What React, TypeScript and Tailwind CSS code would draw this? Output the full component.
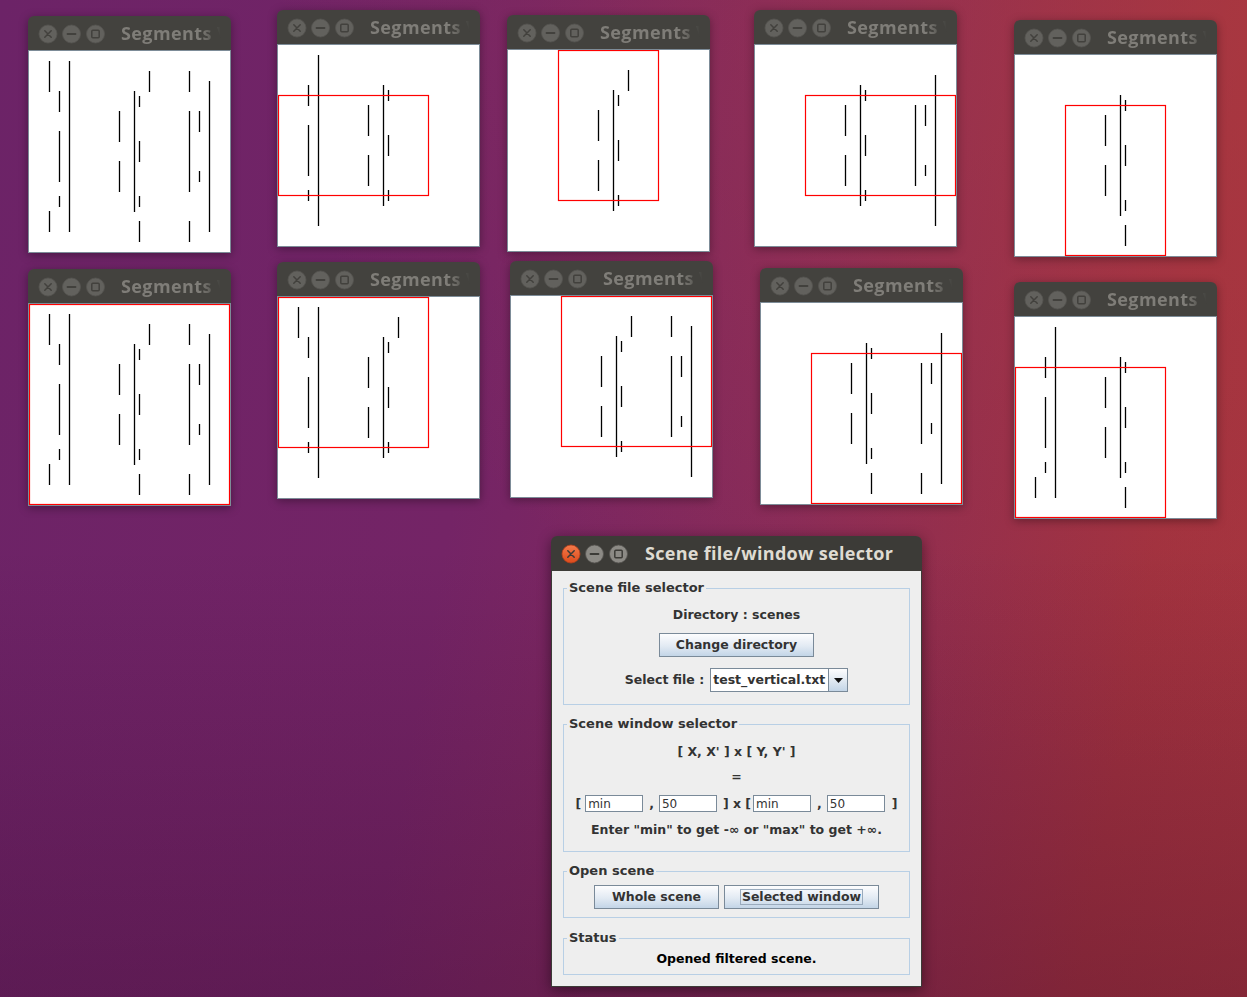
import React from "react";

// scene segments: [x, y1, y2] in viewer pixels
const SEGS: [number, number, number][] = [
  [20, 10, 40], [40, 10, 180], [30, 40, 60], [30, 80, 130], [30, 145, 155],
  [20, 160, 180], [90, 60, 90], [90, 110, 140], [105, 40, 160], [110, 45, 55],
  [110, 90, 110], [110, 145, 155], [110, 170, 190], [120, 20, 40], [160, 20, 40],
  [160, 60, 140], [160, 170, 190], [170, 60, 80], [170, 120, 130], [180, 30, 180],
];

type Rect = [number, number, number, number]; // x1, x2, y1, y2

const VIEWERS: { left: number; top: number; rect: Rect | null }[] = [
  { left: 28, top: 16, rect: null },
  { left: 277, top: 10, rect: [0, 150, 50, 150] },
  { left: 507, top: 15, rect: [50, 150, 0, 150] },
  { left: 754, top: 10, rect: [50, 200, 50, 150] },
  { left: 1014, top: 20, rect: [50, 150, 50, 200] },
  { left: 28, top: 269, rect: [0, 200, 0, 200] },
  { left: 277, top: 262, rect: [0, 150, 0, 150] },
  { left: 510, top: 261, rect: [50, 200, 0, 150] },
  { left: 760, top: 268, rect: [50, 200, 50, 200] },
  { left: 1014, top: 282, rect: [0, 150, 50, 200] },
];

const TitleButtons = ({ active = false, h }: { active?: boolean; h: number }) => {
  const grey = active ? "#8c8a85" : "#62615d";
  const sym = active ? "#3c3b37" : "#42413d";
  return (
    <svg width="80" height={h} viewBox={`0 0 80 ${h}`} className="shrink-0">
      <defs>
        <linearGradient id="closeGrad" x1="0" y1="0" x2="0" y2="1">
          <stop offset="0" stopColor="#f47a4a" />
          <stop offset="1" stopColor="#dc4b1c" />
        </linearGradient>
      </defs>
      <circle cx="20" cy="18" r="9" fill={active ? "url(#closeGrad)" : grey} stroke={active ? "#b9401a" : "#555450"} strokeWidth="0.8" />
      <path d="M16.8 14.8 L23.2 21.2 M23.2 14.8 L16.8 21.2" stroke={sym} strokeWidth="1.5" strokeLinecap="round" />
      <circle cx="43.5" cy="18" r="9" fill={grey} stroke="#555450" strokeWidth="0.8" />
      <path d="M39.5 18 L47.5 18" stroke={sym} strokeWidth="1.8" strokeLinecap="round" />
      <circle cx="67.5" cy="18" r="9" fill={grey} stroke="#555450" strokeWidth="0.8" />
      <rect x="63.8" y="14.3" width="7.4" height="7.4" rx="1" fill="none" stroke={sym} strokeWidth="1.5" />
    </svg>
  );
};

const SegViewer = ({ left, top, rect }: { left: number; top: number; rect: Rect | null }) => {
  const shown = rect
    ? SEGS.filter(([x, y1, y2]) => x >= rect[0] && x <= rect[1] && y2 >= rect[2] && y1 <= rect[3])
    : SEGS;
  return (
    <div className="absolute w-[203px] rounded-t-[6px] shadow-[0_2px_10px_rgba(0,0,0,0.35)]" style={{ left, top }}>
      <div className="flex h-[34px] items-center overflow-hidden rounded-t-[6px] bg-[#43423e]">
        <TitleButtons h={34} />
        <div className="w-[115px] overflow-hidden pl-[13px] [mask-image:linear-gradient(to_right,black_80%,transparent_98%)]">
          <span className="whitespace-nowrap font-['Open_Sans',sans-serif] text-[18px] font-bold tracking-[0.4px] text-[#7f7d78]">
            Segments Viewer
          </span>
        </div>
      </div>
      <div className="border border-[#7d8c98] bg-white">
        <svg width="201" height="201" viewBox="0 0 201 201" className="block">
          {shown.map(([x, y1, y2], i) => (
            <line key={i} x1={x + 0.5} x2={x + 0.5} y1={y1} y2={y2 + 1} stroke="#000" strokeWidth="1.3" />
          ))}
          {rect && (
            <rect
              x={rect[0] + 0.5}
              y={rect[2] + 0.5}
              width={rect[1] - rect[0]}
              height={rect[3] - rect[2]}
              fill="none"
              stroke="#ff0000"
              strokeWidth="1.2"
            />
          )}
        </svg>
      </div>
    </div>
  );
};

const OceanButton = ({ children, className = "" }: { children: React.ReactNode; className?: string }) => (
  <div
    className={`flex h-[24px] items-center justify-center border border-[#7a8a99] bg-[linear-gradient(to_bottom,#fdfdfe,#e2eaf3_55%,#c3d5e7)] ${className}`}
  >
    {children}
  </div>
);

const Field = ({ value, className = "" }: { value: string; className?: string }) => (
  <div className={`flex h-[17px] w-[58px] items-center border border-[#7a8a99] bg-white pl-[2px] font-['DejaVu_Sans',sans-serif] text-[12px] font-normal text-[#333] ${className}`}>
    {value}
  </div>
);

const Group = ({ title, className = "", children }: { title: string; className?: string; children: React.ReactNode }) => (
  <fieldset className={`border border-[#b8cfe5] ${className}`}>
    <legend className="ml-[3px] px-[2px] text-[13px] leading-[16px] font-bold text-[#333]">{title}</legend>
    {children}
  </fieldset>
);

const Selector = () => (
  <div className="absolute left-[551px] top-[536px] w-[371px] overflow-hidden rounded-t-[6px] shadow-[0_3px_14px_rgba(0,0,0,0.45)]">
    <div className="flex h-[35px] items-center bg-[#3c3b37]">
      <TitleButtons active h={35} />
      <span className="pl-[14px] font-['Open_Sans',sans-serif] text-[18px] font-bold tracking-[0.3px] whitespace-nowrap text-[#dfdbd2]">
        Scene file/window selector
      </span>
    </div>
    <div className="h-[416px] border-x border-b border-[#3c3b37] bg-[#eeeeee] px-[11px] pt-[9px] font-['DejaVu_Sans',sans-serif] text-[12.5px] leading-[16px] font-bold text-[#333]">
      <Group title="Scene file selector" className="pb-[12px]">
        <div className="mt-[11px] text-center">Directory : scenes</div>
        <div className="mt-[10px] flex justify-center">
          <OceanButton className="w-[155px]">Change directory</OceanButton>
        </div>
        <div className="mt-[11px] flex items-center justify-center">
          <span>Select file :</span>
          <div className="ml-[6px] flex h-[24px] w-[138px] border border-[#7a8a99] bg-white">
            <div className="flex flex-1 items-center pl-[2px] text-[12.5px]">test_vertical.txt</div>
            <div className="flex w-[19px] items-center justify-center border-l border-[#7a8a99] bg-[linear-gradient(to_bottom,#fdfdfe,#dfe8f1_55%,#c3d5e7)]">
              <svg width="9" height="5" viewBox="0 0 9 5">
                <path d="M0 0 H9 L4.5 5 Z" fill="#111" />
              </svg>
            </div>
          </div>
        </div>
      </Group>

      <Group title="Scene window selector" className="mt-[11px] pb-[13px]">
        <div className="mt-[12px] text-center">[ X, X' ] x [ Y, Y' ]</div>
        <div className="mt-[9px] text-center">=</div>
        <div className="mt-[10px] flex items-center justify-center">
          <span>[</span>
          <Field value="min" className="ml-[4px]" />
          <span className="ml-[6px]">,</span>
          <Field value="50" className="ml-[5px]" />
          <span className="ml-[6px] whitespace-pre">] x [</span>
          <Field value="min" className="ml-[2px]" />
          <span className="ml-[6px]">,</span>
          <Field value="50" className="ml-[5px]" />
          <span className="ml-[7px]">]</span>
        </div>
        <div className="mt-[10px] text-center">Enter "min" to get -∞ or "max" to get +∞.</div>
      </Group>

      <Group title="Open scene" className="mt-[11px] pb-[8px]">
        <div className="mt-[6px] flex justify-center gap-[5px]">
          <OceanButton className="w-[125px]">Whole scene</OceanButton>
          <OceanButton className="w-[155px]">
            <span className="border border-[#9aabbd] px-[1px] leading-[14px]">Selected window</span>
          </OceanButton>
        </div>
      </Group>

      <Group title="Status" className="mt-[12px] pb-[7px]">
        <div className="mt-[5px] text-center text-black">Opened filtered scene.</div>
      </Group>
    </div>
  </div>
);

export default function App() {
  return (
    <div className="relative h-[997px] w-[1247px] overflow-hidden bg-[linear-gradient(to_bottom,transparent_55%,rgba(45,5,35,0.28)),radial-gradient(ellipse_at_100%_0%,rgba(175,60,65,0.55),transparent_55%),linear-gradient(100deg,#6c2367_0%,#742466_38%,#862a5a_62%,#a0313f_88%,#a6343e_100%)]">
      {VIEWERS.map((v, i) => (
        <SegViewer key={i} left={v.left} top={v.top} rect={v.rect} />
      ))}
      <Selector />
    </div>
  );
}
